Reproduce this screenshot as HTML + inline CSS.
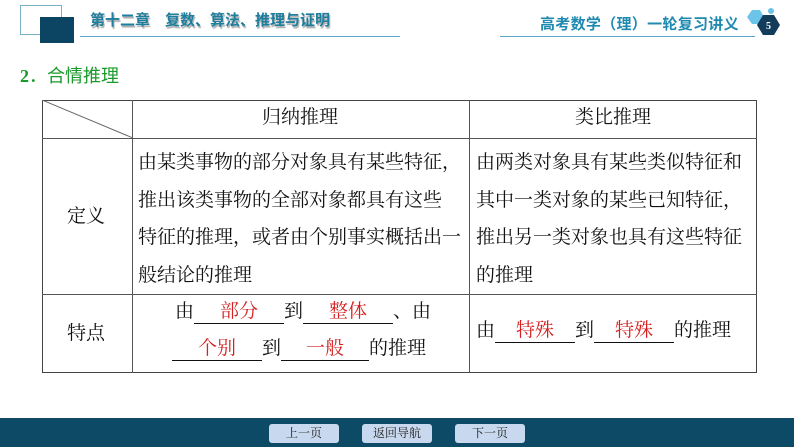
<!DOCTYPE html>
<html><head><meta charset="utf-8"><style>
*{margin:0;padding:0;box-sizing:border-box}
body{width:794px;height:447px;position:relative;background:#fff;font-family:"Liberation Serif","Noto Serif CJK SC",serif;overflow:hidden;color:#111}
.a{position:absolute;white-space:nowrap}
.t{font-size:19px;letter-spacing:0}
.r{color:#d42020}
.u{display:inline-block;border-bottom:1.3px solid #111;text-align:center;line-height:22px}
.l{position:absolute;background:#555}
.btn{position:absolute;top:424px;width:70px;height:19px;background:#c8d8ee;border-radius:3px;font-size:12px;text-align:center;line-height:19px;color:#222}
</style></head><body>
<div class="a" style="left:20px;top:5px;width:42px;height:30px;border:1px solid #7ab3c8"></div>
<div class="a" style="left:40px;top:17px;width:34px;height:26px;background:#0b4563"></div>
<div class="a" style="left:80px;top:36px;width:320px;height:1px;background:#5aa8c4"></div>
<div class="a" style="left:500px;top:36px;width:255px;height:1px;background:#5aa8c4"></div>
<div class="a" style="left:90px;top:9px;font-size:15px;color:#1e7e9e;font-family:'Noto Sans CJK SC',sans-serif;font-weight:bold;text-shadow:1px 2px 1px #aaa">第十二章　复数、算法、推理与证明</div>
<div class="a" style="left:540px;top:13px;font-size:15px;letter-spacing:0.3px;color:#1f8ab0;font-family:'Noto Sans CJK SC',sans-serif;font-weight:bold">高考数学（理）一轮复习讲义</div>
<svg class="a" style="left:743px;top:5px" width="40" height="32"><polygon points="4,12 9,5 17,5 21,12 17,19 9,19" fill="#6cc4e8"/><circle cx="28" cy="6" r="3" fill="#6cc4e8"/><polygon points="14,20 20,10 31,10 37,20 31,30 20,30" fill="#123c5a"/><text x="25.5" y="24" font-size="10" fill="#fff" text-anchor="middle" font-family="Liberation Serif" font-weight="bold">5</text></svg>
<div class="a" style="left:20px;top:62px;font-size:18px;color:#1a9a2a;font-family:'Liberation Serif','Noto Sans CJK SC',sans-serif"><b>2</b>．合情推理</div>
<div class="a" style="left:42px;top:100px;width:715px;height:273px;border:1.3px solid #444"></div>
<div class="l" style="left:42px;top:138px;width:715px;height:1.3px"></div>
<div class="l" style="left:42px;top:294px;width:715px;height:1.3px"></div>
<div class="l" style="left:132px;top:100px;width:1.3px;height:273px"></div>
<div class="l" style="left:469px;top:100px;width:1.3px;height:273px"></div>
<svg class="a" style="left:42px;top:100px" width="91" height="39"><line x1="0" y1="0" x2="91" y2="38" stroke="#666" stroke-width="1"/></svg>
<div class="a t" style="left:262px;top:102px">归纳推理</div>
<div class="a t" style="left:575px;top:102px">类比推理</div>
<div class="a t" style="left:67px;top:201px">定义</div>
<div class="a t" style="left:67px;top:318px">特点</div>
<div class="a t" style="left:138px;top:144px;line-height:37.5px">由某类事物的部分对象具有某些特征，<br>推出该类事物的全部对象都具有这些<br>特征的推理，或者由个别事实概括出一<br>般结论的推理</div>
<div class="a t" style="left:476px;top:144px;line-height:37.5px">由两类对象具有某些类似特征和<br>其中一类对象的某些已知特征，<br>推出另一类对象也具有这些特征<br>的推理</div>
<div class="a t" style="left:175px;top:296px">由<span class="u r" style="width:90px">部分</span>到<span class="u r" style="width:90px">整体</span>、由</div>
<div class="a t" style="left:172px;top:333px"><span class="u r" style="width:90px">个别</span>到<span class="u r" style="width:88px">一般</span>的推理</div>
<div class="a t" style="left:476px;top:315px">由<span class="u r" style="width:80px">特殊</span>到<span class="u r" style="width:80px">特殊</span>的推理</div>
<div class="a" style="left:0;top:418px;width:794px;height:29px;background:#0c4a66"></div>
<div class="btn" style="left:269px">上一页</div>
<div class="btn" style="left:362px">返回导航</div>
<div class="btn" style="left:455px">下一页</div>
</body></html>
